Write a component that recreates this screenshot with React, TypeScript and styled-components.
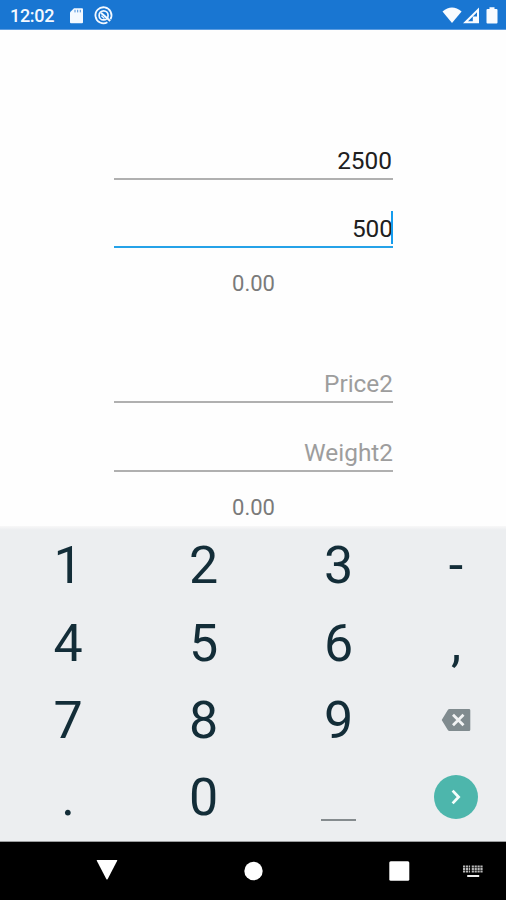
import React from "react";
import styled, { createGlobalStyle } from "styled-components";

const GlobalStyle = createGlobalStyle`
  *, *::before, *::after { box-sizing: border-box; }
  body { margin: 0; background: #fff; font-family: Roboto, "Liberation Sans", sans-serif; }
`;

const Screen = styled.div`
  width: 506px;
  height: 900px;
  display: flex;
  flex-direction: column;
  overflow: hidden;
  background: #fefefe;
`;

const StatusBar = styled.header`
  flex: none;
  height: 30px;
  display: flex;
  align-items: flex-start;
  justify-content: space-between;
  background: #1976d2;
  border-bottom: 1px solid #5c9ce0;
  color: #f4f9ff;
`;

const StatusTime = styled.span`
  width: 60px;
  padding: 6px 0 0 10px;
  font-size: 18px;
  line-height: 20px;
  font-weight: 500;
  letter-spacing: -0.3px;
`;

const StatusGroup = styled.div`
  display: flex;
`;

const Form = styled.main`
  flex: none;
  height: 496px;
  padding: 106px 113px 0 114px;
`;

const Comparison = styled.section`
  height: 223px;
`;

const Field = styled.div<{ $active?: boolean; $hint?: boolean }>`
  position: relative;
  height: 44px;
  padding-right: ${(p) => (p.$active || p.$hint ? 0 : 1)}px;
  border-bottom: ${(p) => (p.$active ? "2px solid #25a2e8" : "2px solid #b0b0b0")};
  color: ${(p) => (p.$hint ? "#9d9d9d" : "#202020")};
  font-size: 24.4px;
  line-height: 50px;
  text-align: right;
  white-space: nowrap;
`;

const LowerField = styled(Field)`
  height: ${(p) => (p.$active ? 68 : 69)}px;
  padding-top: ${(p) => (p.$active ? 24 : 25)}px;
`;

const Caret = styled.span`
  position: absolute;
  right: 0;
  bottom: 2px;
  width: 2px;
  height: 33px;
  background: #159ced;
`;

const Result = styled.output`
  display: block;
  padding-top: 21px;
  color: #7a7a7a;
  font-size: 22px;
  line-height: 30px;
  text-align: center;
`;

const Keypad = styled.div`
  flex: none;
  height: 316px;
  display: grid;
  grid-template-columns: 136px 135px 135px 100px;
  grid-template-rows: repeat(4, 77.4px);
  background: linear-gradient(#f8f8f8 0, #eceef0 4px);
  border-bottom: 1px solid #9b9d9e;
`;

const Key = styled.button`
  border: 0;
  padding: 1px 0 0;
  background: none;
  color: #132d38;
  font: 400 52px/77px Roboto, sans-serif;
  display: flex;
  align-items: center;
  justify-content: center;
`;

const DigitKey = styled(Key)`
  padding-top: 2px;
`;

const SpaceMark = styled.span`
  width: 35px;
  height: 2px;
  margin-top: 45px;
  background: #858b8e;
`;

const EnterDisc = styled.span`
  width: 44px;
  height: 44px;
  border-radius: 50%;
  display: flex;
  align-items: center;
  justify-content: center;
  background: #4db6ac;
`;

const NavBar = styled.nav`
  flex: 1;
  display: grid;
  grid-template-columns: 146px 146px 146px 1fr;
  padding: 17px 23px 0 34px;
  background: #000;
`;

const NavItem = styled.span`
  display: flex;
  align-items: flex-start;
  justify-content: center;
`;

const NavEnd = styled(NavItem)`
  justify-content: flex-start;
  margin-top: 4px;
  margin-left: -10px;
`;

const StatusIcons = () => (
  <svg width="56" height="29" viewBox="0 0 56 29" fill="#f4f9ff">
    <path d="M14 8.2h8q1 0 1 1v13q0 1-1 1H11q-1 0-1-1V12.2z" />
    <path d="M15 9.8v2.6M17.7 9.8v2.6M20.3 9.8v2.6" stroke="#4c8fd8" strokeWidth="1" />
    <g fill="none" stroke="#f4f9ff">
      <path d="M47.4 22.2a8 8 0 1 1 3-3" strokeWidth="1.8" />
      <circle cx="43.6" cy="15.4" r="4.5" strokeWidth="1.7" />
      <path d="m41 12.8 9.2 8.2" strokeWidth="2" />
      <path d="m41.4 15.8 3 2.7" strokeWidth="1.2" />
    </g>
  </svg>
);

const SignalIcons = () => (
  <svg width="66" height="29" viewBox="0 0 66 29" fill="#f8fbff">
    <path d="M2.5 11.4Q12 3.8 21.6 11.4L12 23z" />
    <path fillRule="evenodd" d="M39 7.5v15.8H23zM37 12.2l-9 9h4.8v-4.8H37z" />
    <path d="M34.8 17.5H37v4h-2.2z" />
    <path d="M49.5 7.2h5v1.8h2q1 0 1 1v12.4q0 1-1 1h-9q-1 0-1-1V10q0-1 1-1h2z" />
  </svg>
);

const DeleteIcon = () => (
  <svg width="30" height="24" viewBox="0 0 30 24">
    <path d="M8.5 1H28q1.3 0 1.3 1.3v19.4q0 1.3-1.3 1.3H8.5Q7.4 23 6.8 22L.7 12 6.8 2Q7.4 1 8.5 1z" fill="#808b8f" />
    <path d="m12 6.8 10.5 10.4m0-10.4L12 17.2" stroke="#f1f3f4" strokeWidth="2.8" />
  </svg>
);

const Chevron = () => (
  <svg width="12" height="18" viewBox="0 0 12 18" fill="none">
    <path d="m2.6 2.6 6 6.4-6 6.4" stroke="#f5fffc" strokeWidth="2.8" />
  </svg>
);

const KeyboardIcon = () => (
  <svg width="22" height="16" viewBox="0 0 22 16" fill="none" stroke="#b8b8b8">
    <path d="M1 3.6h20M1 6.1h20M1 8.6h20" strokeWidth="2" strokeDasharray="2.2 .7" />
    <path d="M8.6 2v8" stroke="#000" strokeWidth="1" />
    <path d="M5.2 13h12" strokeWidth="2" stroke="#eee" />
  </svg>
);

const keys = ["1", "2", "3", "-", "4", "5", "6", ",", "7", "8", "9", "delete", ".", "0", "space", "enter"];

function PadKey({ name }: { name: string }) {
  if (name === "delete") return <Key aria-label="Delete"><DeleteIcon /></Key>;
  if (name === "space") return <Key aria-label="Space"><SpaceMark /></Key>;
  if (name === "enter") return <Key aria-label="Next"><EnterDisc><Chevron /></EnterDisc></Key>;
  return <DigitKey>{name}</DigitKey>;
}

export default function App() {
  return (
    <Screen>
      <GlobalStyle />
      <StatusBar>
        <StatusGroup>
          <StatusTime>12:02</StatusTime>
          <StatusIcons />
        </StatusGroup>
        <SignalIcons />
      </StatusBar>
      <Form>
        <Comparison>
          <Field>2500</Field>
          <LowerField $active>500<Caret /></LowerField>
          <Result>0.00</Result>
        </Comparison>
        <Comparison>
          <Field $hint>Price2</Field>
          <LowerField $hint>Weight2</LowerField>
          <Result>0.00</Result>
        </Comparison>
      </Form>
      <Keypad>
        {keys.map((name) => <PadKey key={name} name={name} />)}
      </Keypad>
      <NavBar>
        <NavItem>
          <svg width="22" height="22" viewBox="0 0 22 22" fill="#fff"><path d="M1.2 1h19.6q.8 0 .4.8L11.7 20q-.7 1-1.4 0L.8 1.8Q.4 1 1.2 1z" /></svg>
        </NavItem>
        <NavItem>
          <svg width="22" height="24" viewBox="0 0 22 24" fill="#fff"><circle cx="11.5" cy="12" r="9.2" /></svg>
        </NavItem>
        <NavItem>
          <svg width="22" height="24" viewBox="0 0 22 24" fill="#fff"><rect x="1.3" y="2.2" width="20" height="19.5" rx="1.5" /></svg>
        </NavItem>
        <NavEnd><KeyboardIcon /></NavEnd>
      </NavBar>
    </Screen>
  );
}
